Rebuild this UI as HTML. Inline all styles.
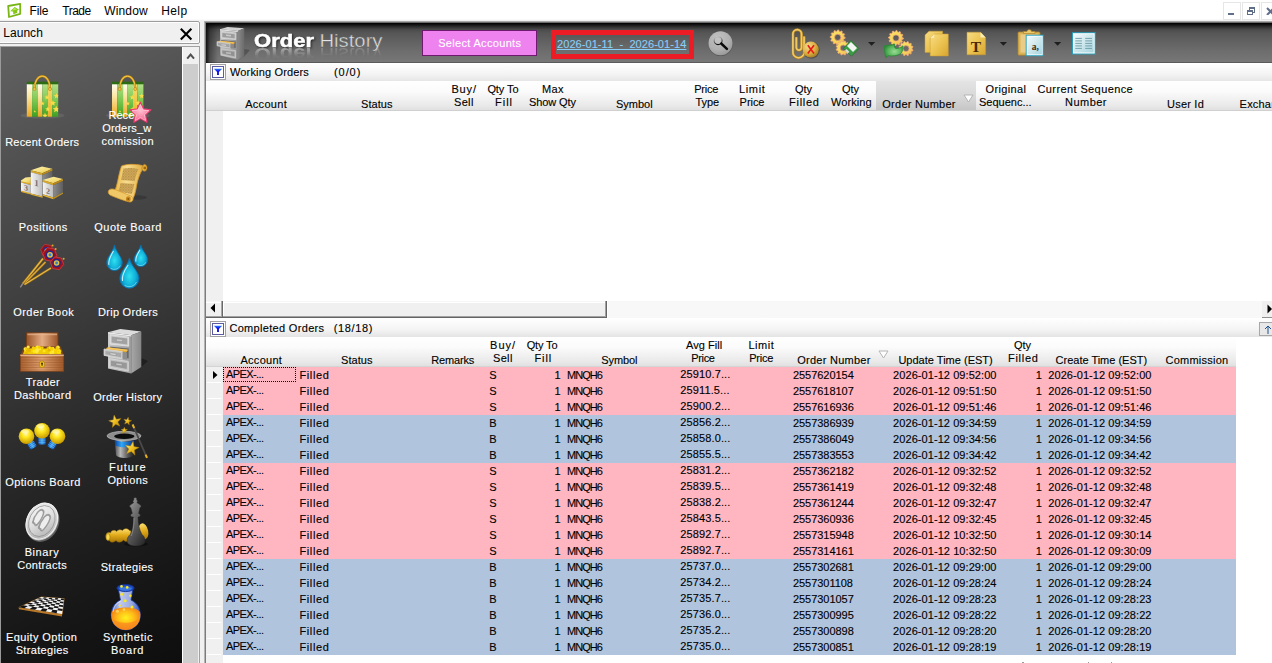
<!DOCTYPE html>
<html><head><meta charset="utf-8"><title>Order History</title>
<style>
*{box-sizing:border-box;margin:0;padding:0}
html,body{width:1272px;height:663px;overflow:hidden;background:#fff}
body{position:relative;font-family:"Liberation Sans",sans-serif;font-size:11px;color:#000}
.a{position:absolute}
.t{position:absolute;white-space:nowrap;line-height:13px;-webkit-text-stroke:0.12px currentColor}
.c{position:absolute;white-space:nowrap;line-height:13px;text-align:center;transform:translateX(-50%)}
.r{position:absolute;white-space:nowrap;line-height:13px;text-align:right}
.menu{position:absolute;top:3px;font-size:13px;line-height:16px;white-space:nowrap}
.lbl{position:absolute;color:#fff;font-size:11px;line-height:13px;text-align:center;transform:translateX(-50%);white-space:nowrap}
.hdr{background:linear-gradient(#ffffff 0%,#fbfbfb 35%,#e9e9e9 85%,#e0e0e0 100%)}
.row{position:absolute;left:223px;width:1013px;height:16px}
.rh{position:absolute;left:207px;width:14px;height:1px;background:#fff}
</style></head><body>

<svg class="a" style="left:4px;top:1px" width="20" height="20" viewBox="4 1 20 20">
 <polygon points="8.2,6 20.2,3.9 20.2,13.8 9,17" fill="#fff" stroke="#7ab516" stroke-width="1.8" stroke-linejoin="round"/>
 <polygon points="10.2,11.2 14.7,6.9 19,9.8 17.2,10.4 17.2,13 13.2,14.2 13.2,11.6" fill="#84c618"/>
 <polygon points="11.6,10.7 14.7,7.8 17,9.4 14.2,10.3" fill="#b0e84c"/>
</svg>
<div class="t" style="left:29.5px;top:2.6px;font-size:12px;line-height:16px;letter-spacing:-0.133px;-webkit-text-stroke:0">File</div>
<div class="t" style="left:62.3px;top:2.6px;font-size:12px;line-height:16px;letter-spacing:-0.525px;-webkit-text-stroke:0">Trade</div>
<div class="t" style="left:104.2px;top:2.6px;font-size:12px;line-height:16px;letter-spacing:0.16px;-webkit-text-stroke:0">Window</div>
<div class="t" style="left:161.3px;top:2.6px;font-size:12px;line-height:16px;letter-spacing:0.367px;-webkit-text-stroke:0">Help</div>

<div class="a" style="left:0;top:19px;width:1272px;height:2px;background:linear-gradient(#fff,#ececec)"></div>
<!-- window buttons -->
<div class="a" style="left:1223px;top:2px;width:18px;height:18px;border:1px solid #e6e6e6;background:#fff"></div>
<div class="a" style="left:1228px;top:13px;width:6px;height:2px;background:#60708a"></div>
<div class="a" style="left:1242px;top:2px;width:18px;height:18px;border:1px solid #e6e6e6;background:#fff"></div>
<div class="a" style="left:1249px;top:7px;width:6px;height:6px;border:1px solid #5e6e86;border-top-width:2px"></div>
<div class="a" style="left:1247px;top:10px;width:6px;height:5px;border:1px solid #5e6e86;border-top-width:2px;background:#fff"></div>
<div class="a" style="left:1261px;top:2px;width:18px;height:18px;border:1px solid #e6e6e6;background:#fff"></div>
<svg class="a" style="left:1266px;top:7px" width="8" height="8"><path d="M1 1L8 8M1 8L8 1" stroke="#60708a" stroke-width="2"/></svg>
<!-- Launch panel -->
<div class="a" style="left:-2px;top:21px;width:202px;height:23px;background:#f0f0f0;border:1px solid #9c9c9c;border-radius:2px;box-shadow:inset 0 0 0 1px #fdfdfd"></div>

<div class="t" style="left:3.2px;top:24.6px;font-size:12px;line-height:16px;letter-spacing:0.06px;-webkit-text-stroke:0">Launch</div>
<svg class="a" style="left:179px;top:27px" width="14" height="14"><path d="M1.8 1.8L12.4 12.4M12.4 1.8L1.8 12.4" stroke="#000" stroke-width="2.1"/></svg>


<!-- sidebar -->
<div class="a" style="left:0;top:44px;width:204px;height:619px;background:#f0f0f0"></div>
<div class="a" style="left:200px;top:21px;width:4px;height:30px;background:#f0f0f0"></div>
<div class="a" style="left:0;top:46px;width:200px;height:617px;background:#fff;border-top:1px solid #a0a0a0;border-right:1px solid #a0a0a0"></div>
<div class="a" style="left:0;top:47px;width:182px;height:616px;background:linear-gradient(155deg,#626262 0%,#505050 18%,#3c3c3c 42%,#262626 65%,#151515 88%,#0e0e0e 100%)"></div>
<div class="a" style="left:0;top:47px;width:1px;height:616px;background:#9a9a9a"></div>
<div class="a" style="left:183px;top:47px;width:16px;height:616px;background:#f0f0f0"></div>
<div class="a" style="left:183px;top:64px;width:15px;height:599px;background:#cdcdcd"></div>
<svg class="a" style="left:185px;top:51px" width="12" height="10"><path d="M2.2 7.6L5.6 3.6L9 7.6" fill="none" stroke="#505050" stroke-width="2"/></svg>

<svg class="a" style="left:0;top:47px" width="183" height="616" viewBox="0 47 183 616">
<defs>
 <linearGradient id="bL" x1="0" y1="0" x2="0" y2="1"><stop offset="0" stop-color="#fffdf0"/><stop offset="0.35" stop-color="#fbe9a8"/><stop offset="1" stop-color="#eea820"/></linearGradient>
 <linearGradient id="bY" x1="0" y1="0" x2="0" y2="1"><stop offset="0" stop-color="#f4e070"/><stop offset="1" stop-color="#eeb028"/></linearGradient>
 <linearGradient id="bG" x1="0" y1="0" x2="0" y2="1"><stop offset="0" stop-color="#b4e088"/><stop offset="0.5" stop-color="#7cc850"/><stop offset="1" stop-color="#3ea020"/></linearGradient>
 <radialGradient id="pk" cx="0.5" cy="0.4" r="0.6"><stop offset="0" stop-color="#ffc4d4"/><stop offset="0.6" stop-color="#f888a8"/><stop offset="1" stop-color="#f46088"/></radialGradient>
 <linearGradient id="sil" x1="0" y1="0" x2="1" y2="0"><stop offset="0" stop-color="#f4f4f4"/><stop offset="1" stop-color="#bdbdbd"/></linearGradient>
 <linearGradient id="silD" x1="0" y1="0" x2="1" y2="0"><stop offset="0" stop-color="#8c8c8c"/><stop offset="1" stop-color="#5e5e5e"/></linearGradient>
 <linearGradient id="gtop" x1="0" y1="0" x2="1" y2="1"><stop offset="0" stop-color="#fdf4b4"/><stop offset="0.6" stop-color="#f4dc78"/><stop offset="1" stop-color="#e0b030"/></linearGradient>
 <linearGradient id="parch" x1="0" y1="0" x2="1" y2="0"><stop offset="0" stop-color="#e8b848"/><stop offset="0.4" stop-color="#f8dc90"/><stop offset="1" stop-color="#e0a838"/></linearGradient>
 <radialGradient id="drop" cx="0.5" cy="0.6" r="0.6"><stop offset="0" stop-color="#30e0f0"/><stop offset="0.55" stop-color="#10b0d8"/><stop offset="1" stop-color="#0868a8"/></radialGradient>
 <linearGradient id="wood" x1="0" y1="0" x2="1" y2="0"><stop offset="0" stop-color="#a86030"/><stop offset="0.5" stop-color="#e0a070"/><stop offset="1" stop-color="#a05828"/></linearGradient>
 <linearGradient id="lid" x1="0" y1="0" x2="1" y2="0"><stop offset="0" stop-color="#9a5428"/><stop offset="0.5" stop-color="#e4ac84"/><stop offset="1" stop-color="#9a5428"/></linearGradient>
 <linearGradient id="cF" x1="0" y1="0" x2="1" y2="0"><stop offset="0" stop-color="#cacaca"/><stop offset="1" stop-color="#9a9a9a"/></linearGradient>
 <linearGradient id="cS" x1="0" y1="0" x2="1" y2="0"><stop offset="0" stop-color="#a8a8a8"/><stop offset="1" stop-color="#868686"/></linearGradient>
 <radialGradient id="bulb" cx="0.45" cy="0.35" r="0.65"><stop offset="0" stop-color="#fff8b0"/><stop offset="0.35" stop-color="#ffe820"/><stop offset="1" stop-color="#c89800"/></radialGradient>
 <linearGradient id="base" x1="0" y1="0" x2="1" y2="0"><stop offset="0" stop-color="#0848b0"/><stop offset="0.5" stop-color="#40a8f0"/><stop offset="1" stop-color="#0848b0"/></linearGradient>
 <linearGradient id="hat" x1="0" y1="0" x2="1" y2="0"><stop offset="0" stop-color="#4a4a4a"/><stop offset="0.3" stop-color="#b8b8b8"/><stop offset="0.65" stop-color="#5a5a5a"/><stop offset="1" stop-color="#1a1a1a"/></linearGradient>
 <linearGradient id="band" x1="0" y1="0" x2="1" y2="0"><stop offset="0" stop-color="#0840a0"/><stop offset="0.35" stop-color="#30a8f8"/><stop offset="1" stop-color="#082880"/></linearGradient>
 <linearGradient id="gst" x1="0" y1="0" x2="1" y2="1"><stop offset="0" stop-color="#fff090"/><stop offset="0.5" stop-color="#f0c020"/><stop offset="1" stop-color="#b88400"/></linearGradient>
 <linearGradient id="coin2" x1="0" y1="0.1" x2="1" y2="0.9"><stop offset="0" stop-color="#f6f6f6"/><stop offset="0.5" stop-color="#dedede"/><stop offset="1" stop-color="#b2b2b2"/></linearGradient><radialGradient id="coin" cx="0.4" cy="0.35" r="0.75"><stop offset="0" stop-color="#fafafa"/><stop offset="0.6" stop-color="#dcdcdc"/><stop offset="1" stop-color="#a4a4a4"/></radialGradient>
 <linearGradient id="king" x1="0.2" y1="0" x2="0.8" y2="1"><stop offset="0" stop-color="#9a9a9a"/><stop offset="0.35" stop-color="#6e6e6e"/><stop offset="0.7" stop-color="#4c4c4c"/><stop offset="1" stop-color="#2c2c2c"/></linearGradient>
 <linearGradient id="gpc" x1="0" y1="0" x2="0" y2="1"><stop offset="0" stop-color="#fce070"/><stop offset="0.5" stop-color="#e0a818"/><stop offset="1" stop-color="#a87808"/></linearGradient>
 <radialGradient id="liq" cx="0.5" cy="0.45" r="0.6"><stop offset="0" stop-color="#fff020"/><stop offset="0.45" stop-color="#ffc018"/><stop offset="1" stop-color="#f07018"/></radialGradient>
 <linearGradient id="glass" x1="0" y1="0" x2="1" y2="0"><stop offset="0" stop-color="#4868c8"/><stop offset="0.3" stop-color="#c0c8ec"/><stop offset="0.7" stop-color="#98a8e0"/><stop offset="1" stop-color="#3050b8"/></linearGradient>
 <pattern id="dots" width="1.6" height="1.6" patternUnits="userSpaceOnUse"><rect width="1.6" height="1.6" fill="#d4ac5c"/><rect x="0" y="0" width="0.8" height="0.8" fill="#a88038"/><rect x="0.8" y="0.8" width="0.8" height="0.8" fill="#b89048"/></pattern><clipPath id="bagclip"><rect x="26.8" y="81.7" width="31.4" height="35"/></clipPath>
 <g id="bag">
  <ellipse cx="42.5" cy="115.4" rx="22" ry="3.2" fill="#9a9a9a" opacity="0.2"/>
  <rect x="26.8" y="84" width="5.3" height="32.7" fill="url(#bL)"/>
  <rect x="32.1" y="84" width="5.8" height="32.7" fill="url(#bG)"/>
  <rect x="37.9" y="84" width="4.4" height="32.7" fill="url(#bL)"/>
  <rect x="42.3" y="84" width="5.5" height="32.7" fill="url(#bG)"/>
  <rect x="47.8" y="84" width="4.3" height="32.7" fill="url(#bY)"/>
  <rect x="52.1" y="84" width="6.1" height="32.7" fill="url(#bG)"/>
  <rect x="26.8" y="81.7" width="31.4" height="2.6" fill="#2c6c12"/>
  <g fill="#f8dc48" clip-path="url(#bagclip)"><polygon points="56.50,93.00 57.24,94.98 59.35,95.07 57.70,96.39 58.26,98.43 56.50,97.26 54.74,98.43 55.30,96.39 53.65,95.07 55.76,94.98"/><polygon points="47.00,94.60 47.69,96.45 49.66,96.53 48.12,97.76 48.65,99.67 47.00,98.58 45.35,99.67 45.88,97.76 44.34,96.53 46.31,96.45"/><polygon points="52.90,100.00 53.69,102.11 55.94,102.21 54.18,103.62 54.78,105.79 52.90,104.54 51.02,105.79 51.62,103.62 49.86,102.21 52.11,102.11"/><polygon points="42.70,101.30 43.24,102.75 44.79,102.82 43.58,103.79 43.99,105.28 42.70,104.42 41.41,105.28 41.82,103.79 40.61,102.82 42.16,102.75"/><polygon points="47.80,106.50 48.49,108.35 50.46,108.43 48.92,109.66 49.45,111.57 47.80,110.48 46.15,111.57 46.68,109.66 45.14,108.43 47.11,108.35"/><polygon points="56.20,105.50 57.14,108.01 59.81,108.13 57.72,109.79 58.43,112.37 56.20,110.90 53.97,112.37 54.68,109.79 52.59,108.13 55.26,108.01"/><polygon points="45.00,112.60 45.79,114.71 48.04,114.81 46.28,116.22 46.88,118.39 45.00,117.14 43.12,118.39 43.72,116.22 41.96,114.81 44.21,114.71"/><polygon points="34.80,110.00 35.15,110.92 36.13,110.97 35.36,111.58 35.62,112.53 34.80,111.99 33.98,112.53 34.24,111.58 33.47,110.97 34.45,110.92"/><polygon points="50.00,88.40 50.39,89.46 51.52,89.51 50.64,90.21 50.94,91.29 50.00,90.67 49.06,91.29 49.36,90.21 48.48,89.51 49.61,89.46"/>  </g>
  <path d="M34.5 89C34.5 71.8 50 71.8 50 89" fill="none" stroke="#a87810" stroke-width="2.2"/>
  <path d="M34.5 89C34.5 71.8 50 71.8 50 89" fill="none" stroke="#f0c040" stroke-width="1.2"/>
  <circle cx="34.5" cy="89" r="1.6" fill="#f0c040" stroke="#a87810" stroke-width="0.5"/>
  <circle cx="50" cy="89" r="1.6" fill="#f0c040" stroke="#a87810" stroke-width="0.5"/>
 </g>
</defs>
<use href="#bag"/>
<use href="#bag" transform="translate(85.2,0)"/>

<g>
 <!-- left block 3 -->
 <polygon points="21,180.4 25.4,177.4 30.8,177 30.8,184 21,182.2" fill="url(#gtop)"/>
 <polygon points="21,181.2 30.8,183.6 30.8,185 21,182.6" fill="#d8a828"/>
 <polygon points="21,182.6 30.8,185 30.8,194 21,191.4" fill="url(#sil)"/>
 <polygon points="21,190.6 30.8,193.2 30.8,194.6 21,192" fill="#d8a828"/>
 <!-- center block 1 -->
 <polygon points="30.8,170.3 42,166.6 52.4,168.8 42.3,173.2" fill="url(#gtop)"/>
 <polygon points="30.8,170.3 42.3,173.2 42.3,175.2 30.8,172.2" fill="#d8a828"/>
 <polygon points="42.3,173.2 52.4,168.8 52.4,170.8 42.3,175.2" fill="#b88818"/>
 <polygon points="30.8,172.2 42.3,175.2 42.3,196.4 30.8,193.4" fill="url(#sil)"/>
 <polygon points="42.3,175.2 52.4,170.8 52.4,180 42.3,184" fill="url(#silD)"/>
 <!-- right block 2 -->
 <polygon points="42.7,180.1 53.6,176.8 63,179 53.3,183.3" fill="url(#gtop)"/>
 <polygon points="42.7,180.1 53.3,183.3 53.3,185.3 42.7,182.1" fill="#d8a828"/>
 <polygon points="53.3,183.3 63,179 63,181 53.3,185.3" fill="#b88818"/>
 <polygon points="42.7,182.1 53.3,185.3 53.3,197.6 42.7,194.2" fill="url(#sil)"/>
 <polygon points="53.3,185.3 63,181 63,192.4 53.3,197.6" fill="url(#silD)"/>
 <polygon points="42.7,194.2 53.3,197.6 53.3,199.2 42.7,195.8" fill="#e0b030"/>
 <polygon points="53.3,197.6 63,192.4 63,193.8 53.3,199.2" fill="#c09020"/>
 <polygon points="30.8,193.4 42.7,196.4 42.7,197.8 30.8,194.8" fill="#e0b030"/>
 <g font-family="Liberation Serif, serif" font-size="8px" font-weight="bold" fill="#707070" text-anchor="middle">
  <text x="36.5" y="186" font-size="9px" transform="skewY(14)" style="transform-origin:36.5px 186px">1</text>
  <text x="26" y="190.5" transform="skewY(14)" style="transform-origin:26px 190px">3</text>
  <text x="48" y="194" transform="skewY(17)" style="transform-origin:48px 194px">2</text>
 </g>
</g>

<g>
 <ellipse cx="138" cy="197.5" rx="9" ry="2.2" fill="#000" opacity="0.18"/>
 <path d="M121.5 166 C128 163.5 139 164 145 166.5 C141 170 138 178 136.5 186 C135.5 192 134.5 196 132.5 199.5 C126 198 118 195.5 114.5 191 C117.5 186 118 176 121.5 166Z" fill="url(#parch)" stroke="#d89828" stroke-width="0.8"/>
 <path d="M123.5 168.5 C128 167.5 134 167.8 138.5 169 C136.5 173 135.5 177 134.8 181 L121 180 C122 176 122.5 172 123.5 168.5Z" fill="url(#dots)" opacity="0.9"/>
 <path d="M120.5 183 L134.3 184 C133.5 188 132.8 191 131.6 194 L118.2 191.5 C119.4 189 120 186 120.5 183Z" fill="url(#dots)" opacity="0.9"/>
 <path d="M144 164.2 C147.5 164.5 148 169 145.5 171 C143.5 172 141.5 170 142 167.5Z" fill="#e8b040" stroke="#b07818" stroke-width="0.6"/>
 <circle cx="144.8" cy="168" r="1.4" fill="#a06810"/>
 <path d="M108.3 191.5 C108.5 189 112 188.3 115 189.5 L131 196 C134 197.5 133.5 202 130 202 C126 201.5 113 196.5 110 195 C108.5 194 108.2 193 108.3 191.5Z" fill="#f0c868" stroke="#d89828" stroke-width="0.7"/>
 <ellipse cx="128.3" cy="199" rx="2.4" ry="2.8" fill="#c88820"/>
 <circle cx="128.3" cy="199" r="1" fill="#8a5808"/>
</g>

<g>
 <path d="M20.3 287.4L23.5 282.5" stroke="#8a8a8a" stroke-width="1.4"/>
 <path d="M23 283.5L43 258.5" stroke="#8a6414" stroke-width="2.6"/>
 <path d="M23 283.5L43 258.5" stroke="#e8b848" stroke-width="1.3"/>
 <path d="M24 284L45.5 262" stroke="#8a6414" stroke-width="2.4"/>
 <path d="M24 284L45.5 262" stroke="#e0a838" stroke-width="1.2"/>
 <path d="M24.5 284.5L51 268" stroke="#8a6414" stroke-width="2.6"/>
 <path d="M24.5 284.5L51 268" stroke="#e8b848" stroke-width="1.3"/>
 <polygon points="53.40,251.63 49.22,256.61 42.82,255.48 40.60,249.37 44.78,244.39 51.18,245.52" fill="#981018" stroke="#c03840" stroke-width="0.8"/>
 <circle cx="46.5" cy="250.5" r="3.4" fill="#202c90"/><circle cx="46.5" cy="250.5" r="2" fill="#e8c040"/>
 <polygon points="56.89,255.75 52.26,261.27 45.17,260.02 42.71,253.25 47.34,247.73 54.43,248.98" fill="#a01018" stroke="#d04048" stroke-width="0.8"/>
 <circle cx="50" cy="254.8" r="4.4" fill="#1c2a90"/><circle cx="50" cy="254.8" r="2.9" fill="#e8c040"/><circle cx="50" cy="254.8" r="1.5" fill="#3080d0"/>
 <polygon points="63.70,264.48 59.33,269.69 52.63,268.51 50.30,262.12 54.67,256.91 61.37,258.09" fill="#a01018" stroke="#d04048" stroke-width="0.8"/>
 <circle cx="56.6" cy="263" r="4.2" fill="#1c2a90"/><circle cx="56.6" cy="263" r="2.8" fill="#e8c040"/><circle cx="56.6" cy="263" r="1.4" fill="#3080d0"/>
 <circle cx="52.6" cy="245.5" r="1" fill="#d8a830"/><circle cx="55.6" cy="249" r="1" fill="#d8a830"/><circle cx="63.6" cy="258.8" r="1" fill="#d8a830"/>
</g>
<g><path d="M114.5 245 C116.45 253.01 122.3 256.95 122.3 262.8 A7.8 7.8 0 0 1 106.7 262.8 C106.7 256.95 112.55 253.01 114.5 245Z" fill="url(#drop)" stroke="#0a70b0" stroke-width="0.8"/><path d="M113.33 251.23000000000002 C110.21 256.56 108.26 261.24 108.884 264.36" fill="none" stroke="#d8f8ff" stroke-width="1.1" stroke-linecap="round" opacity="0.9"/><path d="M110.6 268.26 A6.63 6.63 0 0 0 120.35 265.53000000000003" fill="none" stroke="#90e8f8" stroke-width="0.8" opacity="0.8"/><path d="M140.8 245 C142.5 251.66 147.60000000000002 254.70000000000002 147.60000000000002 259.8 A6.8 6.8 0 0 1 134.0 259.8 C134.0 254.70000000000002 139.10000000000002 251.66 140.8 245Z" fill="url(#drop)" stroke="#0a70b0" stroke-width="0.8"/><path d="M139.78 250.18 C137.06 254.36 135.36 258.44 135.90400000000002 261.16" fill="none" stroke="#d8f8ff" stroke-width="1.1" stroke-linecap="round" opacity="0.9"/><path d="M137.4 264.56 A5.779999999999999 5.779999999999999 0 0 0 145.9 262.18" fill="none" stroke="#90e8f8" stroke-width="0.8" opacity="0.8"/><path d="M129.4 258 C131.8 267.27 139.0 271.40000000000003 139.0 278.6 A9.6 9.6 0 0 1 119.80000000000001 278.6 C119.80000000000001 271.40000000000003 127.0 267.27 129.4 258Z" fill="url(#drop)" stroke="#0a70b0" stroke-width="0.8"/><path d="M127.96000000000001 265.21 C124.12 270.92 121.72 276.68 122.488 280.52000000000004" fill="none" stroke="#d8f8ff" stroke-width="1.1" stroke-linecap="round" opacity="0.9"/><path d="M124.60000000000001 285.32000000000005 A8.16 8.16 0 0 0 136.6 281.96000000000004" fill="none" stroke="#90e8f8" stroke-width="0.8" opacity="0.8"/></g>
<g>
 <rect x="26.5" y="332.8" width="31.5" height="16" fill="url(#lid)" stroke="#7a3c18" stroke-width="0.8"/>
 <rect x="27.5" y="333.6" width="29.5" height="1.6" fill="#e8b890" opacity="0.7"/>
 <polygon points="24,346.5 60.8,346.5 63.8,355 20.3,355" fill="#7a4420"/>
 <polygon points="25,348.6 60,348.6 61.6,354.8 22.8,354.8" fill="#f0cc08"/>
 <circle cx="33.3" cy="347.7" r="1.5" fill="#f8d000"/><circle cx="28.2" cy="347.1" r="1.6" fill="#ffe848"/><circle cx="53.0" cy="352.4" r="1.3" fill="#ffe848"/><circle cx="34.7" cy="348.2" r="1.2" fill="#f8d000"/><circle cx="58.0" cy="347.2" r="1.7" fill="#ffe848"/><circle cx="53.0" cy="348.4" r="1.4" fill="#ffe848"/><circle cx="28.0" cy="351.2" r="1.7" fill="#f8d000"/><circle cx="31.2" cy="350.3" r="1.2" fill="#ffe848"/><circle cx="25.3" cy="349.0" r="1.7" fill="#ffe848"/><circle cx="54.7" cy="350.6" r="1.5" fill="#ffe848"/><circle cx="40.1" cy="348.1" r="1.4" fill="#ffe818"/><circle cx="27.8" cy="350.2" r="2.0" fill="#e8b800"/><circle cx="49.5" cy="348.0" r="1.7" fill="#ffe818"/><circle cx="39.4" cy="348.4" r="1.7" fill="#ffe848"/><circle cx="31.4" cy="350.1" r="1.6" fill="#f8d000"/><circle cx="56.7" cy="347.7" r="1.2" fill="#f8d000"/><circle cx="34.7" cy="351.1" r="1.9" fill="#ffe818"/><circle cx="36.6" cy="348.2" r="1.5" fill="#ffe818"/><circle cx="37.5" cy="347.6" r="2.0" fill="#ffe848"/><circle cx="50.7" cy="353.7" r="1.1" fill="#ffe848"/><circle cx="36.3" cy="348.1" r="1.7" fill="#ffe818"/><circle cx="35.3" cy="348.3" r="1.5" fill="#f8d000"/><circle cx="33.8" cy="351.2" r="1.2" fill="#ffe818"/><circle cx="37.7" cy="350.2" r="1.4" fill="#ffe848"/><circle cx="59.9" cy="351.0" r="1.5" fill="#f8d000"/><circle cx="39.8" cy="348.5" r="1.2" fill="#ffe818"/><circle cx="50.8" cy="351.2" r="2.0" fill="#ffe818"/><circle cx="44.1" cy="351.1" r="1.4" fill="#ffe818"/><circle cx="29.3" cy="350.7" r="1.8" fill="#e8b800"/><circle cx="47.8" cy="348.4" r="1.3" fill="#e8b800"/><circle cx="39.4" cy="347.3" r="1.5" fill="#f8d000"/><circle cx="47.7" cy="350.0" r="1.3" fill="#f8d000"/><circle cx="26.1" cy="348.8" r="1.3" fill="#f8d000"/><circle cx="52.0" cy="349.9" r="1.3" fill="#ffe848"/><circle cx="26.8" cy="353.5" r="1.6" fill="#e8b800"/><circle cx="58.7" cy="351.6" r="1.9" fill="#ffe818"/><circle cx="42.3" cy="347.7" r="1.3" fill="#f8d000"/><circle cx="36.8" cy="351.6" r="1.8" fill="#ffe848"/><circle cx="53.5" cy="350.7" r="1.7" fill="#ffe848"/><circle cx="36.8" cy="349.7" r="1.5" fill="#ffe848"/><circle cx="58.7" cy="351.7" r="1.1" fill="#f8d000"/><circle cx="51.8" cy="348.9" r="1.9" fill="#f8d000"/><circle cx="49.1" cy="350.3" r="1.5" fill="#e8b800"/><circle cx="57.5" cy="348.5" r="1.1" fill="#f8d000"/><circle cx="25.5" cy="353.1" r="1.2" fill="#e8b800"/><circle cx="55.7" cy="350.9" r="1.9" fill="#f8d000"/>
 <rect x="20.3" y="354.6" width="43.5" height="16.8" fill="url(#wood)" stroke="#7a3c18" stroke-width="0.6"/>
 <g stroke="#8a4a20" stroke-width="0.6" opacity="0.55"><path d="M20.5 357.5h43M20.5 360h43M20.5 362.5h43M20.5 365h43M20.5 367.5h43M20.5 370h43"/></g>
 <rect x="20.3" y="354.6" width="43.5" height="1.5" fill="#f0c098" opacity="0.8"/>
 <rect x="39.4" y="361" width="5.2" height="6.6" rx="2.2" fill="#f0c020" stroke="#a07808" stroke-width="0.6"/>
 <circle cx="42" cy="363.5" r="0.9" fill="#3a2808"/><rect x="41.6" y="363.5" width="0.9" height="2.4" fill="#3a2808"/>
</g>

<g>
 <polygon points="131.2,373.6 141.3,367 148,361 141.3,358" fill="#000" opacity="0.35"/>
 <polygon points="108,332.3 120.3,329 141.3,331.6 131.2,335.2" fill="#dcdcdc"/>
 <polygon points="131.2,335.2 141.3,331.6 141.3,367 131.2,373.6" fill="url(#cS)"/>
 <polygon points="108,332.3 131.2,335.2 131.2,373.6 108,368.5" fill="url(#cF)"/>
 <polygon points="108,332.3 131.2,335.2 131.2,336.4 108,333.5" fill="#ececec"/>
 <!-- top drawer -->
 <polygon points="110.1,334.8 128.7,337 128.7,346.2 110.1,344" fill="#d0d0d0" stroke="#e6e6e6" stroke-width="0.8"/>
 <polygon points="111.6,336.6 127.2,338.5 127.2,344.4 111.6,342.5" fill="#a2a2a2"/>
 <polygon points="116.5,338.9 122.5,339.6 122.5,341.6 116.5,340.9" fill="#d0d0d0" stroke="#888" stroke-width="0.4"/>
 <!-- bottom drawer -->
 <polygon points="109.4,358.8 128.3,361.4 128.3,371.2 109.4,367.2" fill="#c2c2c2" stroke="#dadada" stroke-width="0.8"/>
 <polygon points="111,360.8 126.8,363 126.8,369 111,365.8" fill="#989898"/>
 <polygon points="116,363 122,363.8 122,365.9 116,365" fill="#c8c8c8" stroke="#808080" stroke-width="0.4"/>
 <!-- middle -->
 <polygon points="110.1,346.4 128.7,348.6 128.7,358.6 110.1,356.4" fill="#6a6a6a"/>
 <polygon points="107.2,347.2 128.3,349.7 126,352.8 122.5,353.2 105.5,349.6" fill="#e8a82e"/>
 <polygon points="108.4,347.5 127.3,349.7 126.6,350.9 107.4,348.7" fill="#f8c860"/>
 <polygon points="104,349 122.5,351.5 122.5,359 104,355.4" fill="#c8c8c8" stroke="#e0e0e0" stroke-width="0.7"/>
 <polygon points="105.5,351 121,353.1 121,357.2 105.5,354.2" fill="#a8a8a8"/>
 <polygon points="110,352.8 116,353.6 116,355.5 110,354.6" fill="#d8d8d8" stroke="#888" stroke-width="0.4"/>
 <polygon points="122.5,351.5 127,352.8 127,359.4 122.5,359" fill="#8c8c8c"/>
</g>
<g><g transform="rotate(-32 26.5 436.2)"><rect x="22.8" y="442.4" width="7.4" height="7.6" rx="1" fill="url(#base)"/><g stroke="#80d0ff" stroke-width="0.6" opacity="0.8"><path d="M23.0 444.4h7M23.0 446.2h7M23.0 448.0h7"/></g></g><g transform="rotate(32 57.5 436.2)"><rect x="53.8" y="442.4" width="7.4" height="7.6" rx="1" fill="url(#base)"/><g stroke="#80d0ff" stroke-width="0.6" opacity="0.8"><path d="M54.0 444.4h7M54.0 446.2h7M54.0 448.0h7"/></g></g><g transform="rotate(0 42 430.8)"><rect x="38.3" y="437.0" width="7.4" height="7.6" rx="1" fill="url(#base)"/><g stroke="#80d0ff" stroke-width="0.6" opacity="0.8"><path d="M38.5 439.0h7M38.5 440.8h7M38.5 442.6h7"/></g></g><circle cx="26.5" cy="436.2" r="7.8" fill="url(#bulb)"/><circle cx="57.5" cy="436.2" r="7.8" fill="url(#bulb)"/><circle cx="42" cy="430.8" r="7.8" fill="url(#bulb)"/><ellipse cx="25" cy="431.5" rx="4" ry="2" fill="#fff" opacity="0.45"/><ellipse cx="56" cy="431.5" rx="4" ry="2" fill="#fff" opacity="0.45"/><ellipse cx="40.5" cy="426" rx="4" ry="2" fill="#fff" opacity="0.45"/></g>
<g>
 <path d="M114.5 437 L116 455 C118 459 131.5 459 133.5 455 L134.7 437Z" fill="url(#hat)"/>
 <path d="M114.7 439.8 C120 442.5 129 442.5 134.5 439.8 L134.1 445.3 C129 448 120 448 115.1 445.3Z" fill="url(#band)"/>
 <ellipse cx="124" cy="435.9" rx="17" ry="4.6" fill="#8e8e8e" stroke="#c4c4c4" stroke-width="0.6"/>
 <ellipse cx="124.3" cy="436.3" rx="10.2" ry="2.7" fill="#0c0c0c"/>
 <path d="M132.6 424.5L147 457.8" stroke="#4a4a4a" stroke-width="1.8"/>
 <path d="M132.6 424.5L134.2 428.2" stroke="#e8b020" stroke-width="2"/>
 <path d="M145.6 454.6L147 457.8" stroke="#e8b020" stroke-width="2"/>
 <polygon points="114.05,415.10 116.38,419.17 121.03,418.50 117.87,421.98 119.95,426.18 115.67,424.26 112.31,427.53 112.82,422.87 108.66,420.68 113.26,419.72" fill="url(#gst)" stroke="#a87808" stroke-width="0.4"/>
 <polygon points="128.21,417.16 128.72,420.02 131.56,420.63 129.00,422.00 129.30,424.89 127.20,422.87 124.55,424.05 125.82,421.44 123.88,419.28 126.75,419.67" fill="url(#gst)" stroke="#a87808" stroke-width="0.4"/>
 <polygon points="124.30,427.20 125.12,429.37 127.44,429.48 125.63,430.93 126.24,433.17 124.30,431.90 122.36,433.17 122.97,430.93 121.16,429.48 123.48,429.37" fill="url(#gst)" stroke="#a87808" stroke-width="0.4"/>
 <polygon points="133.08,441.31 133.96,446.52 139.13,447.57 134.45,450.01 135.04,455.25 131.28,451.55 126.48,453.74 128.83,449.02 125.27,445.13 130.48,445.90" fill="url(#gst)" stroke="#a87808" stroke-width="0.4"/>
</g>

<g transform="rotate(28 42 521.6)">
 <ellipse cx="43.8" cy="522.6" rx="15.4" ry="19.4" fill="#5c5c5c"/>
 <ellipse cx="42" cy="521.6" rx="15.6" ry="19.6" fill="#c4c4c4"/>
 <ellipse cx="41.6" cy="521.2" rx="14.8" ry="18.8" fill="url(#coin)" stroke="#f4f4f4" stroke-width="0.9"/>
 <ellipse cx="41.6" cy="521.2" rx="12.4" ry="16.2" fill="url(#coin2)" stroke="#8e8e8e" stroke-width="0.7"/>
 <g fill="#9a9a9a" stroke="#9a9a9a" stroke-width="0.8">
  <path d="M33.4 518 C33 511 38 508 39.6 513 C40.6 516 40.6 522 39.8 526 C39.2 529 36.8 529 36.4 527 C35 528.4 33.2 527 33.6 524.6 C32.6 522.6 33 520 33.4 518Z"/>
  <path d="M41.4 519 C41 512 46.4 509.6 47.8 514.6 C48.8 518 48.4 524 47.4 528 C46.8 531 44.4 531 44 529 C42.6 530.4 40.8 529 41.2 526.6 C40.4 524.4 41 521.4 41.4 519Z"/>
 </g>
 <g fill="#eeeeee">
  <path d="M34.4 518 C34.2 512.4 37.8 510.4 38.8 514 C39.6 517 39.4 521.4 38.8 525 C38.4 527.4 37 527.4 36.8 525.6 C35.6 526.6 34.4 525.6 34.6 523.8 C33.8 522 34.2 519.6 34.4 518Z"/>
  <path d="M42.4 519 C42.2 513.6 46 511.6 47 515.4 C47.8 518.6 47.4 523.4 46.6 527 C46.2 529.4 44.8 529.4 44.6 527.6 C43.4 528.6 42.2 527.6 42.4 525.8 C41.6 524 42.2 520.8 42.4 519Z"/>
 </g>
</g>

<g>
 <ellipse cx="136" cy="544" rx="12" ry="2.5" fill="#000" opacity="0.4"/>
 <ellipse cx="143.4" cy="531.4" rx="4.8" ry="8.2" fill="url(#gpc)" transform="rotate(-12 143.4 531.4)"/>
 <path d="M106 538 C105 533.5 108 531.5 110.5 533 C111 530 115 529.5 116.5 531.5 C118 529.5 121 529.2 122.5 530.5 C124 528 128 528 129.5 530.5 L131 531 L131 540.5 C128 542.5 125 541.5 123.5 540 C121 542.8 117.5 542.8 116 540.5 C113.5 543 110 542.5 109.5 540.5 C107.5 541 106.3 540 106 538Z" fill="url(#gpc)" stroke="#8a6408" stroke-width="0.5"/>
 <ellipse cx="108" cy="537" rx="2" ry="3.3" fill="#f8d850" stroke="#8a6408" stroke-width="0.5"/>
 <path d="M135.2 497.6 C136.6 497.6 137.2 499 136.6 500 C138 500.4 138 502.2 136.8 502.6 L140.8 505.2 C141.6 506.2 141 507.4 140 507.6 L138.6 513.4 C140.6 514 141 516 139.4 516.8 L138 517 C138.2 524 139.4 530 142 534.5 C144.5 536.5 145.4 539 145 541.5 C145 544.8 140 546 136 546 C132 546 127.2 544.8 127.2 541.5 C126.8 539 127.8 536.5 130.2 534.5 C132.6 530 133.4 524 133.4 517 L131.6 516.8 C130 516 130.4 514 132.4 513.4 L130.8 507.6 C129.8 507.4 129.2 506.2 130 505.2 L133.8 502.6 C132.6 502.2 132.6 500.4 134 500 C133.4 499 134 497.6 135.2 497.6Z" fill="url(#king)" stroke="#222" stroke-width="0.4"/>
 <path d="M134 518 C134 526 133 532 131 536" stroke="#a0a0a0" stroke-width="1" fill="none" opacity="0.6"/>
</g>

<g>
 <polygon points="18.8,607.3 62,614 62,616.6 18.8,609.3" fill="#b87828"/>
 <polygon points="18.2,607.3 41.3,596.5 64.6,598.2 62.6,614.6" fill="#a06820"/>
 <polygon points="19.8,607.3 41.3,597.1 64,598.6 62,614" fill="#f4f4f4"/>
 <g fill="#141414"><polygon points="18.80,607.30 24.20,608.14 27.98,606.08 23.06,605.37"/><polygon points="26.22,603.94 30.78,604.56 33.30,603.19 29.07,602.65"/><polygon points="31.72,601.44 35.65,601.91 37.89,600.69 34.25,600.30"/><polygon points="36.67,599.20 40.04,599.52 42.12,598.39 39.02,598.13"/><polygon points="27.98,606.08 32.89,606.80 35.33,605.18 30.78,604.56"/><polygon points="33.30,603.19 37.53,603.73 39.58,602.37 35.65,601.91"/><polygon points="37.89,600.69 41.53,601.08 43.40,599.84 40.04,599.52"/><polygon points="42.12,598.39 45.21,598.64 46.97,597.48 44.14,597.29"/><polygon points="29.60,608.97 35.00,609.81 37.81,607.51 32.89,606.80"/><polygon points="35.33,605.18 39.89,605.80 41.76,604.27 37.53,603.73"/><polygon points="39.58,602.37 43.51,602.83 45.17,601.47 41.53,601.08"/><polygon points="43.40,599.84 46.77,600.16 48.31,598.89 45.21,598.64"/><polygon points="37.81,607.51 42.72,608.22 44.44,606.43 39.89,605.80"/><polygon points="41.76,604.27 45.99,604.81 47.44,603.30 43.51,602.83"/><polygon points="45.17,601.47 48.81,601.86 50.13,600.48 46.77,600.16"/><polygon points="48.31,598.89 51.41,599.15 52.65,597.85 49.81,597.66"/><polygon points="40.40,610.65 45.80,611.49 47.64,608.94 42.72,608.22"/><polygon points="44.44,606.43 49.00,607.05 50.22,605.35 45.99,604.81"/><polygon points="47.44,603.30 51.36,603.76 52.45,602.25 48.81,601.86"/><polygon points="50.13,600.48 53.50,600.80 54.51,599.40 51.41,599.15"/><polygon points="47.64,608.94 52.55,609.65 53.55,607.67 49.00,607.05"/><polygon points="50.22,605.35 54.45,605.89 55.29,604.23 51.36,603.76"/><polygon points="52.45,602.25 56.09,602.64 56.86,601.12 53.50,600.80"/><polygon points="54.51,599.40 57.60,599.65 58.33,598.23 55.49,598.04"/><polygon points="51.20,612.33 56.60,613.16 57.46,610.37 52.55,609.65"/><polygon points="53.55,607.67 58.11,608.30 58.68,606.43 54.45,605.89"/><polygon points="55.29,604.23 59.22,604.69 59.73,603.04 56.09,602.64"/><polygon points="56.86,601.12 60.22,601.44 60.70,599.91 57.60,599.65"/><polygon points="57.46,610.37 62.38,611.08 62.66,608.92 58.11,608.30"/><polygon points="58.68,606.43 62.91,606.97 63.15,605.16 59.22,604.69"/><polygon points="59.73,603.04 63.37,603.43 63.59,601.77 60.22,601.44"/><polygon points="60.70,599.91 63.80,600.16 64.00,598.60 61.16,598.41"/></g>
</g>

<g>
 <path d="M118.2 588 L120.4 600 C113 603.5 111.2 610 111.2 615.5 A14.6 14.6 0 0 0 140.4 615.5 C140.4 610 138.6 603.5 131 600 L133 588Z" fill="url(#glass)" stroke="#1838a0" stroke-width="0.8"/>
 <path d="M111.6 612 C114 608.6 120 607.6 125.8 607.6 C131.6 607.6 137.6 608.6 140 612 C140.6 614 140.4 615.5 140.4 615.5 A14.6 14.6 0 0 1 111.2 615.5 C111.2 615.5 111 614 111.6 612Z" fill="url(#liq)"/>
 <path d="M113.5 619 C117 624 134 624 138 619 C136 626.5 130 629.4 125.8 629.4 C121.6 629.4 115.5 626.5 113.5 619Z" fill="#f88820" opacity="0.7"/>
 <ellipse cx="125.5" cy="588" rx="8.7" ry="3.6" fill="#1c48c0" stroke="#0c2c90" stroke-width="0.8"/>
 <ellipse cx="125.5" cy="588.6" rx="6.4" ry="2.2" fill="#3a78e0"/>
 <g fill="#f8e820"><circle cx="121.5" cy="586.4" r="1.3"/><circle cx="127.2" cy="587.4" r="1.3"/><circle cx="121.8" cy="594.4" r="1.4"/><circle cx="130.4" cy="595.8" r="1.3"/><circle cx="125.2" cy="600.8" r="1.5"/><circle cx="119.8" cy="605.6" r="1.1"/><circle cx="132" cy="607" r="1.5"/></g>
 <g fill="#ffd860" opacity="0.9"><circle cx="117.4" cy="611.2" r="1.5"/><circle cx="124" cy="609.6" r="1.3"/></g>
 <path d="M113.2 612 C113.6 606 117 602.6 120.6 601.4" stroke="#fff" stroke-width="1" fill="none" opacity="0.55"/>
</g>
</svg>

<div class="t" style="left:5.2px;top:136px;letter-spacing:0.192px;color:#fff">Recent Orders</div>
<div class="t" style="left:108.4px;top:109px;letter-spacing:0.08px;color:#fff">Recent</div>
<div class="t" style="left:102.2px;top:122px;letter-spacing:0.2px;color:#fff">Orders_w</div>
<div class="t" style="left:101.5px;top:135px;letter-spacing:0.387px;color:#fff">comission</div>
<div class="t" style="left:18.8px;top:221px;letter-spacing:0.475px;color:#fff">Positions</div>
<div class="t" style="left:94.3px;top:221px;letter-spacing:0.48px;color:#fff">Quote Board</div>
<div class="t" style="left:13.2px;top:306px;letter-spacing:0.478px;color:#fff">Order Book</div>
<div class="t" style="left:98px;top:306px;letter-spacing:0.28px;color:#fff">Drip Orders</div>
<div class="t" style="left:25.8px;top:376px;letter-spacing:0.4px;color:#fff">Trader</div>
<div class="t" style="left:13.9px;top:389px;letter-spacing:0.413px;color:#fff">Dashboard</div>
<div class="t" style="left:93.2px;top:391px;letter-spacing:0.283px;color:#fff">Order History</div>
<div class="t" style="left:5.2px;top:476px;letter-spacing:0.4px;color:#fff">Options Board</div>
<div class="t" style="left:109.1px;top:461px;letter-spacing:0.96px;color:#fff">Future</div>
<div class="t" style="left:107.4px;top:474px;letter-spacing:0.4px;color:#fff">Options</div>
<div class="t" style="left:24.7px;top:546px;letter-spacing:0.56px;color:#fff">Binary</div>
<div class="t" style="left:17.2px;top:559px;letter-spacing:0.3px;color:#fff">Contracts</div>
<div class="t" style="left:100.7px;top:561px;letter-spacing:0.322px;color:#fff">Strategies</div>
<div class="t" style="left:5.9px;top:631px;letter-spacing:0.408px;color:#fff">Equity Option</div>
<div class="t" style="left:15.7px;top:644px;letter-spacing:0.333px;color:#fff">Strategies</div>
<div class="t" style="left:103px;top:631px;letter-spacing:0.525px;color:#fff">Synthetic</div>
<div class="t" style="left:111px;top:644px;letter-spacing:0.775px;color:#fff">Board</div>
<svg class="a" style="left:125px;top:98px" width="32" height="30" viewBox="125 98 32 30">
 <polygon points="140.40,102.20 143.46,108.99 150.86,109.80 145.35,114.81 146.87,122.10 140.40,118.40 133.93,122.10 135.45,114.81 129.94,109.80 137.34,108.99" fill="url(#pk)" stroke="#ee3c70" stroke-width="1.3" stroke-linejoin="round"/>
 <polygon points="140.40,104.60 142.93,109.92 148.77,110.68 144.49,114.73 145.57,120.52 140.40,117.70 135.23,120.52 136.31,114.73 132.03,110.68 137.87,109.92" fill="none" stroke="#ffd8e4" stroke-width="0.8" stroke-linejoin="round" opacity="0.85"/>
</svg>

<!-- main panel frame -->
<div class="a" style="left:204px;top:21px;width:1068px;height:642px;background:#7c7c7c"></div>
<div class="a" style="left:204px;top:21px;width:1px;height:642px;background:#b4b4b4"></div>
<div class="a" style="left:204px;top:21px;width:1068px;height:42px;background:linear-gradient(#a8a8a8 0px,#a8a8a8 1px,#6c6c6c 1px,#6c6c6c 2px,#000 2px,#0a0a0a 3px,#2a2a2a 5.5px,#4a4a4a 8.5px,#565656 12px,#626262 21px,#6e6e6e 31px,#767676 40.5px,#767676 41px,#5a5a5a 41px,#5a5a5a 42px)"></div>
<div class="a" style="left:204px;top:23px;width:14px;height:40px;background:linear-gradient(to right,rgba(0,0,0,.0) 0,rgba(0,0,0,.0) 2px,rgba(0,0,0,.85) 2px,rgba(0,0,0,.35) 6px,rgba(0,0,0,0) 14px)"></div>
<div class="a" style="left:204px;top:21px;width:1px;height:42px;background:#b4b4b4"></div>
<div class="a" style="left:205px;top:22px;width:1px;height:41px;background:#7c7c7c"></div>
<!-- working orders header -->
<div class="a" style="left:206px;top:63px;width:1066px;height:18px;background:linear-gradient(#fff,#f4f4f4 60%,#e6e6e6)"></div>
<div class="a hdr" style="left:206px;top:81px;width:1066px;height:29px"></div>
<div class="a" style="left:206px;top:110px;width:1066px;height:1px;background:#d0d0d0"></div>
<div class="a" style="left:206px;top:111px;width:17px;height:190px;background:#f0f0f0"></div>
<div class="a" style="left:223px;top:111px;width:1049px;height:190px;background:#fff"></div>

<div class="a" style="left:210px;top:64px;width:16px;height:16px;border:1px solid #a2a2a2;background:#fdfdfd"></div>
<div class="a" style="left:212px;top:66px;width:12px;height:12px;border:1px solid #5c5ca4;background:#fff"></div>
<svg class="a" style="left:213px;top:67px" width="10" height="10"><defs><linearGradient id="fg1" x1="0" y1="0" x2="0" y2="1"><stop offset="0" stop-color="#2a7cff"/><stop offset="0.4" stop-color="#1010f0"/><stop offset="1" stop-color="#0000d0"/></linearGradient></defs><path d="M0.8 1.8H9.2L5.9 5V8H4.1V5Z" fill="url(#fg1)"/></svg>
<div class="t" style="left:230px;top:66px;letter-spacing:0.154px;">Working Orders</div>
<div class="t" style="left:334px;top:66px;letter-spacing:0.925px;">(0/0)</div>
<div class="a" style="left:876px;top:81px;width:100px;height:29px;background:linear-gradient(#e4e4e4,#d6d6d6 60%,#c6c6c6)"></div>
<svg class="a" style="left:963px;top:94px" width="11" height="9"><path d="M1 1H10L5.5 8Z" fill="#fff" stroke="#b4b4b4" stroke-width="1"/></svg>
<div class="t" style="left:245.2px;top:98px;letter-spacing:0.3px;">Account</div>
<div class="t" style="left:361px;top:98px;letter-spacing:0.04px;">Status</div>
<div class="t" style="left:451.4px;top:83px;letter-spacing:0.867px;">Buy/</div>
<div class="t" style="left:454px;top:96px;letter-spacing:0.333px;">Sell</div>
<div class="t" style="left:487.4px;top:83px;letter-spacing:-0.08px;">Qty To</div>
<div class="t" style="left:495px;top:96px;letter-spacing:1.0px;">Fill</div>
<div class="t" style="left:542px;top:83px;letter-spacing:0.35px;">Max</div>
<div class="t" style="left:529px;top:96px;letter-spacing:-0.114px;">Show Qty</div>
<div class="t" style="left:616px;top:98px;letter-spacing:0.0px;">Symbol</div>
<div class="t" style="left:694.3px;top:83px;letter-spacing:-0.275px;">Price</div>
<div class="t" style="left:695.5px;top:96px;letter-spacing:-0.1px;">Type</div>
<div class="t" style="left:739px;top:83px;letter-spacing:0.65px;">Limit</div>
<div class="t" style="left:739.6px;top:96px;letter-spacing:-0.05px;">Price</div>
<div class="t" style="left:795px;top:83px;letter-spacing:0.0px;">Qty</div>
<div class="t" style="left:789px;top:96px;letter-spacing:0.74px;">Filled</div>
<div class="t" style="left:842px;top:83px;letter-spacing:0.0px;">Qty</div>
<div class="t" style="left:831px;top:96px;letter-spacing:0.083px;">Working</div>
<div class="t" style="left:882.3px;top:98px;letter-spacing:0.264px;">Order Number</div>
<div class="t" style="left:985.5px;top:83px;letter-spacing:0.357px;">Original</div>
<div class="t" style="left:979px;top:96px;letter-spacing:0.0px;">Sequenc...</div>
<div class="t" style="left:1037.5px;top:83px;letter-spacing:0.393px;">Current Sequence</div>
<div class="t" style="left:1065px;top:96px;letter-spacing:0.48px;">Number</div>
<div class="t" style="left:1167px;top:98px;letter-spacing:0.217px;">User Id</div>
<div class="t" style="left:1239.6px;top:98px;letter-spacing:0.2px">Exchange</div>

<div class="a" style="left:206px;top:301px;width:1066px;height:17px;background:#f8f8f8"></div>
<div class="a" style="left:206px;top:301px;width:401px;height:17px;background:#f0f0f0;box-shadow:inset -1px -1px 0 #646464,inset -2px -2px 0 #a2a2a2,inset 0 1px 0 #f6f6f6,inset 0 2px 0 #fff"></div><div class="a" style="left:607px;top:301px;width:1px;height:17px;background:#fff"></div>
<div class="a" style="left:221px;top:301px;width:1px;height:16px;background:#a8a8a8"></div><div class="a" style="left:222px;top:301px;width:1px;height:16px;background:#686868"></div><div class="a" style="left:223px;top:302px;width:1px;height:14px;background:#fff"></div>
<svg class="a" style="left:210px;top:303px" width="6" height="10"><path d="M5 0.5V9.5L0.5 5Z" fill="#000"/></svg>
<div class="a" style="left:1262px;top:301px;width:10px;height:17px;background:#f0f0f0;border-bottom:1px solid #909090"></div>
<svg class="a" style="left:1267px;top:304px" width="6" height="10"><path d="M0.5 0.5V9.5L5 5Z" fill="#000"/></svg>
<!-- completed header -->
<div class="a" style="left:206px;top:318px;width:1066px;height:19px;background:linear-gradient(#fff,#f4f4f4 60%,#e4e4e4)"></div>
<div class="a" style="left:1259px;top:322px;width:14px;height:14px;background:#e8e8e8;border:1px solid #a8a8a8"></div>
<svg class="a" style="left:1264px;top:325px" width="8" height="9"><path d="M4 1V9M1 4L4 1L7 4" fill="none" stroke="#205090" stroke-width="1"/></svg>
<div class="a" style="left:206px;top:337px;width:1066px;height:326px;background:#fff"></div>
<div class="a hdr" style="left:206px;top:337px;width:1030px;height:29px"></div>
<div class="a" style="left:206px;top:366px;width:1030px;height:1px;background:#d4d4d4"></div>
<div class="a" style="left:206px;top:367px;width:17px;height:296px;background:#f0f0f0"></div>

<div class="a" style="left:210px;top:321px;width:16px;height:16px;border:1px solid #a2a2a2;background:#fdfdfd"></div>
<div class="a" style="left:212px;top:323px;width:12px;height:12px;border:1px solid #5c5ca4;background:#fff"></div>
<svg class="a" style="left:213px;top:324px" width="10" height="10"><defs><linearGradient id="fg2" x1="0" y1="0" x2="0" y2="1"><stop offset="0" stop-color="#2a7cff"/><stop offset="0.4" stop-color="#1010f0"/><stop offset="1" stop-color="#0000d0"/></linearGradient></defs><path d="M0.8 1.8H9.2L5.9 5V8H4.1V5Z" fill="url(#fg2)"/></svg>
<div class="t" style="left:229.4px;top:322px;letter-spacing:0.32px;">Completed Orders</div>
<div class="t" style="left:333.8px;top:322px;letter-spacing:0.617px;">(18/18)</div>
<div class="t" style="left:240.5px;top:354px;letter-spacing:0.267px;">Account</div>
<div class="t" style="left:341px;top:354px;letter-spacing:0.04px;">Status</div>
<div class="t" style="left:431.3px;top:354px;letter-spacing:-0.183px;">Remarks</div>
<div class="t" style="left:490.1px;top:339px;letter-spacing:0.967px;">Buy/</div>
<div class="t" style="left:493px;top:352px;letter-spacing:0.333px;">Sell</div>
<div class="t" style="left:526.7px;top:339px;letter-spacing:-0.14px;">Qty To</div>
<div class="t" style="left:534.5px;top:352px;letter-spacing:0.9px;">Fill</div>
<div class="t" style="left:601.3px;top:354px;letter-spacing:-0.12px;">Symbol</div>
<div class="t" style="left:686px;top:339px;letter-spacing:0.043px;">Avg Fill</div>
<div class="t" style="left:691.2px;top:352px;letter-spacing:-0.325px;">Price</div>
<div class="t" style="left:748.4px;top:339px;letter-spacing:0.575px;">Limit</div>
<div class="t" style="left:749.2px;top:352px;letter-spacing:-0.2px;">Price</div>
<div class="t" style="left:797.3px;top:354px;letter-spacing:0.245px;">Order Number</div>
<div class="t" style="left:898.4px;top:354px;letter-spacing:0.013px;">Update Time (EST)</div>
<div class="t" style="left:1014px;top:339px;letter-spacing:0.0px;">Qty</div>
<div class="t" style="left:1008px;top:352px;letter-spacing:0.72px;">Filled</div>
<div class="t" style="left:1055.6px;top:354px;letter-spacing:-0.012px;">Create Time (EST)</div>
<div class="t" style="left:1165.6px;top:354px;letter-spacing:0.222px;">Commission</div>
<svg class="a" style="left:878px;top:350px" width="11" height="9"><path d="M1 1H10L5.5 8Z" fill="#fff" stroke="#b4b4b4" stroke-width="1"/></svg>
<div class="row" style="top:367px;background:#ffb6c1"><span class="t" style="left:3.00px;top:1px;letter-spacing:-0.586px">APEX-...</span><span class="t" style="left:76.40px;top:2px;letter-spacing:0.64px">Filled</span><span class="t" style="left:266.20px;top:2px;letter-spacing:0px">S</span><span class="t" style="left:331.60px;top:2px;letter-spacing:0px">1</span><span class="t" style="left:343.90px;top:2px;letter-spacing:-0.925px">MNQH6</span><span class="t" style="left:457.30px;top:1px;letter-spacing:0.122px">25910.7...</span><span class="t" style="left:569.90px;top:2px;letter-spacing:-0.033px">2557620154</span><span class="t" style="left:670.10px;top:2px;letter-spacing:0.067px">2026-01-12 09:52:00</span><span class="t" style="left:812.80px;top:2px;letter-spacing:0px">1</span><span class="t" style="left:825.30px;top:2px;letter-spacing:0.056px">2026-01-12 09:52:00</span></div>
<div class="row" style="top:383px;background:#ffb6c1"><span class="t" style="left:3.00px;top:1px;letter-spacing:-0.586px">APEX-...</span><span class="t" style="left:76.40px;top:2px;letter-spacing:0.64px">Filled</span><span class="t" style="left:266.20px;top:2px;letter-spacing:0px">S</span><span class="t" style="left:331.60px;top:2px;letter-spacing:0px">1</span><span class="t" style="left:343.90px;top:2px;letter-spacing:-0.925px">MNQH6</span><span class="t" style="left:457.30px;top:1px;letter-spacing:0.122px">25911.5...</span><span class="t" style="left:569.90px;top:2px;letter-spacing:-0.033px">2557618107</span><span class="t" style="left:670.10px;top:2px;letter-spacing:0.067px">2026-01-12 09:51:50</span><span class="t" style="left:812.80px;top:2px;letter-spacing:0px">1</span><span class="t" style="left:825.30px;top:2px;letter-spacing:0.056px">2026-01-12 09:51:50</span></div>
<div class="rh" style="top:382px"></div>
<div class="row" style="top:399px;background:#ffb6c1"><span class="t" style="left:3.00px;top:1px;letter-spacing:-0.586px">APEX-...</span><span class="t" style="left:76.40px;top:2px;letter-spacing:0.64px">Filled</span><span class="t" style="left:266.20px;top:2px;letter-spacing:0px">S</span><span class="t" style="left:331.60px;top:2px;letter-spacing:0px">1</span><span class="t" style="left:343.90px;top:2px;letter-spacing:-0.925px">MNQH6</span><span class="t" style="left:457.30px;top:1px;letter-spacing:0.122px">25900.2...</span><span class="t" style="left:569.90px;top:2px;letter-spacing:-0.033px">2557616936</span><span class="t" style="left:670.10px;top:2px;letter-spacing:0.067px">2026-01-12 09:51:46</span><span class="t" style="left:812.80px;top:2px;letter-spacing:0px">1</span><span class="t" style="left:825.30px;top:2px;letter-spacing:0.056px">2026-01-12 09:51:46</span></div>
<div class="rh" style="top:398px"></div>
<div class="row" style="top:415px;background:#b0c4de"><span class="t" style="left:3.00px;top:1px;letter-spacing:-0.586px">APEX-...</span><span class="t" style="left:76.40px;top:2px;letter-spacing:0.64px">Filled</span><span class="t" style="left:266.20px;top:2px;letter-spacing:0px">B</span><span class="t" style="left:331.60px;top:2px;letter-spacing:0px">1</span><span class="t" style="left:343.90px;top:2px;letter-spacing:-0.925px">MNQH6</span><span class="t" style="left:457.30px;top:1px;letter-spacing:0.122px">25856.2...</span><span class="t" style="left:569.90px;top:2px;letter-spacing:-0.033px">2557386939</span><span class="t" style="left:670.10px;top:2px;letter-spacing:0.067px">2026-01-12 09:34:59</span><span class="t" style="left:812.80px;top:2px;letter-spacing:0px">1</span><span class="t" style="left:825.30px;top:2px;letter-spacing:0.056px">2026-01-12 09:34:59</span></div>
<div class="rh" style="top:414px"></div>
<div class="row" style="top:431px;background:#b0c4de"><span class="t" style="left:3.00px;top:1px;letter-spacing:-0.586px">APEX-...</span><span class="t" style="left:76.40px;top:2px;letter-spacing:0.64px">Filled</span><span class="t" style="left:266.20px;top:2px;letter-spacing:0px">B</span><span class="t" style="left:331.60px;top:2px;letter-spacing:0px">1</span><span class="t" style="left:343.90px;top:2px;letter-spacing:-0.925px">MNQH6</span><span class="t" style="left:457.30px;top:1px;letter-spacing:0.122px">25858.0...</span><span class="t" style="left:569.90px;top:2px;letter-spacing:-0.033px">2557386049</span><span class="t" style="left:670.10px;top:2px;letter-spacing:0.067px">2026-01-12 09:34:56</span><span class="t" style="left:812.80px;top:2px;letter-spacing:0px">1</span><span class="t" style="left:825.30px;top:2px;letter-spacing:0.056px">2026-01-12 09:34:56</span></div>
<div class="rh" style="top:430px"></div>
<div class="row" style="top:447px;background:#b0c4de"><span class="t" style="left:3.00px;top:1px;letter-spacing:-0.586px">APEX-...</span><span class="t" style="left:76.40px;top:2px;letter-spacing:0.64px">Filled</span><span class="t" style="left:266.20px;top:2px;letter-spacing:0px">B</span><span class="t" style="left:331.60px;top:2px;letter-spacing:0px">1</span><span class="t" style="left:343.90px;top:2px;letter-spacing:-0.925px">MNQH6</span><span class="t" style="left:457.30px;top:1px;letter-spacing:0.122px">25855.5...</span><span class="t" style="left:569.90px;top:2px;letter-spacing:-0.033px">2557383553</span><span class="t" style="left:670.10px;top:2px;letter-spacing:0.067px">2026-01-12 09:34:42</span><span class="t" style="left:812.80px;top:2px;letter-spacing:0px">1</span><span class="t" style="left:825.30px;top:2px;letter-spacing:0.056px">2026-01-12 09:34:42</span></div>
<div class="rh" style="top:446px"></div>
<div class="row" style="top:463px;background:#ffb6c1"><span class="t" style="left:3.00px;top:1px;letter-spacing:-0.586px">APEX-...</span><span class="t" style="left:76.40px;top:2px;letter-spacing:0.64px">Filled</span><span class="t" style="left:266.20px;top:2px;letter-spacing:0px">S</span><span class="t" style="left:331.60px;top:2px;letter-spacing:0px">1</span><span class="t" style="left:343.90px;top:2px;letter-spacing:-0.925px">MNQH6</span><span class="t" style="left:457.30px;top:1px;letter-spacing:0.122px">25831.2...</span><span class="t" style="left:569.90px;top:2px;letter-spacing:-0.033px">2557362182</span><span class="t" style="left:670.10px;top:2px;letter-spacing:0.067px">2026-01-12 09:32:52</span><span class="t" style="left:812.80px;top:2px;letter-spacing:0px">1</span><span class="t" style="left:825.30px;top:2px;letter-spacing:0.056px">2026-01-12 09:32:52</span></div>
<div class="rh" style="top:462px"></div>
<div class="row" style="top:479px;background:#ffb6c1"><span class="t" style="left:3.00px;top:1px;letter-spacing:-0.586px">APEX-...</span><span class="t" style="left:76.40px;top:2px;letter-spacing:0.64px">Filled</span><span class="t" style="left:266.20px;top:2px;letter-spacing:0px">S</span><span class="t" style="left:331.60px;top:2px;letter-spacing:0px">1</span><span class="t" style="left:343.90px;top:2px;letter-spacing:-0.925px">MNQH6</span><span class="t" style="left:457.30px;top:1px;letter-spacing:0.122px">25839.5...</span><span class="t" style="left:569.90px;top:2px;letter-spacing:-0.033px">2557361419</span><span class="t" style="left:670.10px;top:2px;letter-spacing:0.067px">2026-01-12 09:32:48</span><span class="t" style="left:812.80px;top:2px;letter-spacing:0px">1</span><span class="t" style="left:825.30px;top:2px;letter-spacing:0.056px">2026-01-12 09:32:48</span></div>
<div class="rh" style="top:478px"></div>
<div class="row" style="top:495px;background:#ffb6c1"><span class="t" style="left:3.00px;top:1px;letter-spacing:-0.586px">APEX-...</span><span class="t" style="left:76.40px;top:2px;letter-spacing:0.64px">Filled</span><span class="t" style="left:266.20px;top:2px;letter-spacing:0px">S</span><span class="t" style="left:331.60px;top:2px;letter-spacing:0px">1</span><span class="t" style="left:343.90px;top:2px;letter-spacing:-0.925px">MNQH6</span><span class="t" style="left:457.30px;top:1px;letter-spacing:0.122px">25838.2...</span><span class="t" style="left:569.90px;top:2px;letter-spacing:-0.033px">2557361244</span><span class="t" style="left:670.10px;top:2px;letter-spacing:0.067px">2026-01-12 09:32:47</span><span class="t" style="left:812.80px;top:2px;letter-spacing:0px">1</span><span class="t" style="left:825.30px;top:2px;letter-spacing:0.056px">2026-01-12 09:32:47</span></div>
<div class="rh" style="top:494px"></div>
<div class="row" style="top:511px;background:#ffb6c1"><span class="t" style="left:3.00px;top:1px;letter-spacing:-0.586px">APEX-...</span><span class="t" style="left:76.40px;top:2px;letter-spacing:0.64px">Filled</span><span class="t" style="left:266.20px;top:2px;letter-spacing:0px">S</span><span class="t" style="left:331.60px;top:2px;letter-spacing:0px">1</span><span class="t" style="left:343.90px;top:2px;letter-spacing:-0.925px">MNQH6</span><span class="t" style="left:457.30px;top:1px;letter-spacing:0.122px">25843.5...</span><span class="t" style="left:569.90px;top:2px;letter-spacing:-0.033px">2557360936</span><span class="t" style="left:670.10px;top:2px;letter-spacing:0.067px">2026-01-12 09:32:45</span><span class="t" style="left:812.80px;top:2px;letter-spacing:0px">1</span><span class="t" style="left:825.30px;top:2px;letter-spacing:0.056px">2026-01-12 09:32:45</span></div>
<div class="rh" style="top:510px"></div>
<div class="row" style="top:527px;background:#ffb6c1"><span class="t" style="left:3.00px;top:1px;letter-spacing:-0.586px">APEX-...</span><span class="t" style="left:76.40px;top:2px;letter-spacing:0.64px">Filled</span><span class="t" style="left:266.20px;top:2px;letter-spacing:0px">S</span><span class="t" style="left:331.60px;top:2px;letter-spacing:0px">1</span><span class="t" style="left:343.90px;top:2px;letter-spacing:-0.925px">MNQH6</span><span class="t" style="left:457.30px;top:1px;letter-spacing:0.122px">25892.7...</span><span class="t" style="left:569.90px;top:2px;letter-spacing:-0.033px">2557315948</span><span class="t" style="left:670.10px;top:2px;letter-spacing:0.067px">2026-01-12 10:32:50</span><span class="t" style="left:812.80px;top:2px;letter-spacing:0px">1</span><span class="t" style="left:825.30px;top:2px;letter-spacing:0.056px">2026-01-12 09:30:14</span></div>
<div class="rh" style="top:526px"></div>
<div class="row" style="top:543px;background:#ffb6c1"><span class="t" style="left:3.00px;top:1px;letter-spacing:-0.586px">APEX-...</span><span class="t" style="left:76.40px;top:2px;letter-spacing:0.64px">Filled</span><span class="t" style="left:266.20px;top:2px;letter-spacing:0px">S</span><span class="t" style="left:331.60px;top:2px;letter-spacing:0px">1</span><span class="t" style="left:343.90px;top:2px;letter-spacing:-0.925px">MNQH6</span><span class="t" style="left:457.30px;top:1px;letter-spacing:0.122px">25892.7...</span><span class="t" style="left:569.90px;top:2px;letter-spacing:-0.033px">2557314161</span><span class="t" style="left:670.10px;top:2px;letter-spacing:0.067px">2026-01-12 10:32:50</span><span class="t" style="left:812.80px;top:2px;letter-spacing:0px">1</span><span class="t" style="left:825.30px;top:2px;letter-spacing:0.056px">2026-01-12 09:30:09</span></div>
<div class="rh" style="top:542px"></div>
<div class="row" style="top:559px;background:#b0c4de"><span class="t" style="left:3.00px;top:1px;letter-spacing:-0.586px">APEX-...</span><span class="t" style="left:76.40px;top:2px;letter-spacing:0.64px">Filled</span><span class="t" style="left:266.20px;top:2px;letter-spacing:0px">B</span><span class="t" style="left:331.60px;top:2px;letter-spacing:0px">1</span><span class="t" style="left:343.90px;top:2px;letter-spacing:-0.925px">MNQH6</span><span class="t" style="left:457.30px;top:1px;letter-spacing:0.122px">25737.0...</span><span class="t" style="left:569.90px;top:2px;letter-spacing:-0.033px">2557302681</span><span class="t" style="left:670.10px;top:2px;letter-spacing:0.067px">2026-01-12 09:29:00</span><span class="t" style="left:812.80px;top:2px;letter-spacing:0px">1</span><span class="t" style="left:825.30px;top:2px;letter-spacing:0.056px">2026-01-12 09:29:00</span></div>
<div class="rh" style="top:558px"></div>
<div class="row" style="top:575px;background:#b0c4de"><span class="t" style="left:3.00px;top:1px;letter-spacing:-0.586px">APEX-...</span><span class="t" style="left:76.40px;top:2px;letter-spacing:0.64px">Filled</span><span class="t" style="left:266.20px;top:2px;letter-spacing:0px">B</span><span class="t" style="left:331.60px;top:2px;letter-spacing:0px">1</span><span class="t" style="left:343.90px;top:2px;letter-spacing:-0.925px">MNQH6</span><span class="t" style="left:457.30px;top:1px;letter-spacing:0.122px">25734.2...</span><span class="t" style="left:569.90px;top:2px;letter-spacing:-0.033px">2557301108</span><span class="t" style="left:670.10px;top:2px;letter-spacing:0.067px">2026-01-12 09:28:24</span><span class="t" style="left:812.80px;top:2px;letter-spacing:0px">1</span><span class="t" style="left:825.30px;top:2px;letter-spacing:0.056px">2026-01-12 09:28:24</span></div>
<div class="rh" style="top:574px"></div>
<div class="row" style="top:591px;background:#b0c4de"><span class="t" style="left:3.00px;top:1px;letter-spacing:-0.586px">APEX-...</span><span class="t" style="left:76.40px;top:2px;letter-spacing:0.64px">Filled</span><span class="t" style="left:266.20px;top:2px;letter-spacing:0px">B</span><span class="t" style="left:331.60px;top:2px;letter-spacing:0px">1</span><span class="t" style="left:343.90px;top:2px;letter-spacing:-0.925px">MNQH6</span><span class="t" style="left:457.30px;top:1px;letter-spacing:0.122px">25735.7...</span><span class="t" style="left:569.90px;top:2px;letter-spacing:-0.033px">2557301057</span><span class="t" style="left:670.10px;top:2px;letter-spacing:0.067px">2026-01-12 09:28:23</span><span class="t" style="left:812.80px;top:2px;letter-spacing:0px">1</span><span class="t" style="left:825.30px;top:2px;letter-spacing:0.056px">2026-01-12 09:28:23</span></div>
<div class="rh" style="top:590px"></div>
<div class="row" style="top:607px;background:#b0c4de"><span class="t" style="left:3.00px;top:1px;letter-spacing:-0.586px">APEX-...</span><span class="t" style="left:76.40px;top:2px;letter-spacing:0.64px">Filled</span><span class="t" style="left:266.20px;top:2px;letter-spacing:0px">B</span><span class="t" style="left:331.60px;top:2px;letter-spacing:0px">1</span><span class="t" style="left:343.90px;top:2px;letter-spacing:-0.925px">MNQH6</span><span class="t" style="left:457.30px;top:1px;letter-spacing:0.122px">25736.0...</span><span class="t" style="left:569.90px;top:2px;letter-spacing:-0.033px">2557300995</span><span class="t" style="left:670.10px;top:2px;letter-spacing:0.067px">2026-01-12 09:28:22</span><span class="t" style="left:812.80px;top:2px;letter-spacing:0px">1</span><span class="t" style="left:825.30px;top:2px;letter-spacing:0.056px">2026-01-12 09:28:22</span></div>
<div class="rh" style="top:606px"></div>
<div class="row" style="top:623px;background:#b0c4de"><span class="t" style="left:3.00px;top:1px;letter-spacing:-0.586px">APEX-...</span><span class="t" style="left:76.40px;top:2px;letter-spacing:0.64px">Filled</span><span class="t" style="left:266.20px;top:2px;letter-spacing:0px">B</span><span class="t" style="left:331.60px;top:2px;letter-spacing:0px">1</span><span class="t" style="left:343.90px;top:2px;letter-spacing:-0.925px">MNQH6</span><span class="t" style="left:457.30px;top:1px;letter-spacing:0.122px">25735.2...</span><span class="t" style="left:569.90px;top:2px;letter-spacing:-0.033px">2557300898</span><span class="t" style="left:670.10px;top:2px;letter-spacing:0.067px">2026-01-12 09:28:20</span><span class="t" style="left:812.80px;top:2px;letter-spacing:0px">1</span><span class="t" style="left:825.30px;top:2px;letter-spacing:0.056px">2026-01-12 09:28:20</span></div>
<div class="rh" style="top:622px"></div>
<div class="row" style="top:639px;background:#b0c4de"><span class="t" style="left:3.00px;top:1px;letter-spacing:-0.586px">APEX-...</span><span class="t" style="left:76.40px;top:2px;letter-spacing:0.64px">Filled</span><span class="t" style="left:266.20px;top:2px;letter-spacing:0px">B</span><span class="t" style="left:331.60px;top:2px;letter-spacing:0px">1</span><span class="t" style="left:343.90px;top:2px;letter-spacing:-0.925px">MNQH6</span><span class="t" style="left:457.30px;top:1px;letter-spacing:0.122px">25735.0...</span><span class="t" style="left:569.90px;top:2px;letter-spacing:-0.033px">2557300851</span><span class="t" style="left:670.10px;top:2px;letter-spacing:0.067px">2026-01-12 09:28:19</span><span class="t" style="left:812.80px;top:2px;letter-spacing:0px">1</span><span class="t" style="left:825.30px;top:2px;letter-spacing:0.056px">2026-01-12 09:28:19</span></div>
<div class="rh" style="top:638px"></div>
<div class="rh" style="top:654px"></div>
<div class="a" style="left:223px;top:367px;width:73px;height:15px;border:1px dotted #000"></div>
<svg class="a" style="left:213px;top:371px" width="5" height="8"><path d="M0 0V8L4.5 4Z" fill="#000"/></svg>
<div class="a" style="left:1022px;top:662px;width:2px;height:1px;background:#9a9a9a"></div><div class="a" style="left:1088px;top:662px;width:1px;height:1px;background:#9a9a9a"></div><div class="a" style="left:1111px;top:662px;width:1px;height:1px;background:#9a9a9a"></div>

<!-- toolbar title -->
<svg class="a" style="left:206px;top:23px" width="200" height="40" viewBox="206 23 200 40">
 <defs>
  <linearGradient id="cabF" x1="0" y1="0" x2="1" y2="0"><stop offset="0" stop-color="#c4c4c4"/><stop offset="1" stop-color="#8e8e8e"/></linearGradient>
  <linearGradient id="cabS" x1="0" y1="0" x2="1" y2="0"><stop offset="0" stop-color="#8a8a8a"/><stop offset="1" stop-color="#6a6a6a"/></linearGradient>
  <linearGradient id="refl" x1="0" y1="0" x2="0" y2="1"><stop offset="0" stop-color="#fff" stop-opacity="0.55"/><stop offset="1" stop-color="#fff" stop-opacity="0"/></linearGradient>
  <linearGradient id="refm" x1="0" y1="0" x2="0" y2="1"><stop offset="0" stop-color="#fff" stop-opacity="0"/><stop offset="0.35" stop-color="#fff" stop-opacity="0.05"/><stop offset="1" stop-color="#fff" stop-opacity="0.5"/></linearGradient>
  <mask id="rm"><rect x="250" y="34" width="150" height="13.5" fill="url(#refm)"/></mask>
 </defs>
 <!-- cabinet shadow -->
 <polygon points="237.7,59.7 244.3,56.2 250,50 244.3,49" fill="#333" opacity="0.45"/>
 <!-- cabinet body -->
 <polygon points="220,29.3 227.5,27 244.3,28.3 237.7,30.9" fill="#d2d2d2"/>
 <polygon points="237.7,30.9 244.3,28.3 244.3,56.2 237.7,59.7" fill="url(#cabS)"/>
 <polygon points="220,29.3 237.7,30.9 237.7,59.7 220.5,55.6" fill="url(#cabF)"/>
 <polygon points="220,29.3 237.7,30.9 237.7,31.9 220,30.3" fill="#e4e4e4"/>
 <!-- top drawer -->
 <polygon points="221.2,31.5 235.8,32.9 235.8,39.6 221.2,38.2" fill="#c6c6c6" stroke="#e0e0e0" stroke-width="0.7"/>
 <polygon points="222.4,33 234.6,34.2 234.6,38.3 222.4,37.1" fill="#9c9c9c"/>
 <polygon points="226,34.6 231,35.1 231,36.6 226,36.1" fill="#c8c8c8"/>
 <!-- bottom drawer -->
 <polygon points="221.2,49 235.5,50.6 235.5,58 221.2,54.6" fill="#b4b4b4" stroke="#d0d0d0" stroke-width="0.7"/>
 <polygon points="222.4,50.5 234.3,51.8 234.3,56.3 222.4,53.6" fill="#909090"/>
 <polygon points="226,52 231,52.6 231,54.2 226,53.4" fill="#bcbcbc"/>
 <!-- middle drawer open -->
 <polygon points="221.2,40 235.8,41.4 235.8,48 221.2,46.6" fill="#707070"/>
 <polygon points="219,40.7 234.8,42.3 233.9,44.5 230.7,44.9 217.5,42.2" fill="#e8a82e"/>
 <polygon points="220,40.9 234,42.3 233.5,43.2 219.2,41.8" fill="#f6c45a"/>
 <polygon points="217,41.6 230.4,43.4 230.4,48.3 217,45.8" fill="#bebebe" stroke="#d8d8d8" stroke-width="0.6"/>
 <polygon points="218,43 229.4,44.5 229.4,47.2 218,45.1" fill="#a2a2a2"/>
 <polygon points="221.5,44.2 226,44.8 226,46 221.5,45.3" fill="#d0d0d0"/>
 <polygon points="230.4,43.4 233.9,44.5 233.9,48.6 230.4,48.3" fill="#8a8a8a"/>
 <!-- title text -->
 <g font-family="Liberation Sans, sans-serif" font-size="17.5px">
  <text x="254" y="46.5" font-weight="bold" fill="#fff" textLength="60" lengthAdjust="spacingAndGlyphs" stroke="#fff" stroke-width="0.5" style="filter:drop-shadow(1px 1px 1px rgba(0,0,0,.6))">Order</text>
  <text x="319.5" y="46.5" fill="#e4e4e4" textLength="63" lengthAdjust="spacingAndGlyphs" stroke="#6a6a6a" stroke-width="0.45">History</text>
  <g mask="url(#rm)" transform="translate(0,94.5) scale(1,-1)">
   <text x="254" y="46.5" font-weight="bold" fill="#fff" textLength="60" lengthAdjust="spacingAndGlyphs">Order</text>
   <text x="319.5" y="46.5" fill="#ddd" textLength="63" lengthAdjust="spacingAndGlyphs" opacity="0.6">History</text>
  </g>
 </g>
</svg>
<!-- select accounts -->
<div class="a" style="left:422px;top:30px;width:115px;height:26px;background:#ee82ee;border:1px solid #6e1a6e"></div>
<div class="t" style="left:438.2px;top:37px;color:#fff;letter-spacing:0.321px">Select Accounts</div>
<!-- date box -->
<div class="a" style="left:551px;top:30px;width:143px;height:29px;border:5px solid #ed1c24"></div>
<div class="t" style="left:557px;top:38px;color:#87cefa;font-size:11px;text-decoration:underline;white-space:pre;letter-spacing:0.07px">2026-01-11  -  2026-01-14</div>


<svg class="a" style="left:700px;top:23px" width="420" height="40" viewBox="700 23 420 40">
 <defs>
  <radialGradient id="mg" cx="0.4" cy="0.3" r="0.85"><stop offset="0" stop-color="#c2c2c2"/><stop offset="0.55" stop-color="#b0b0b0"/><stop offset="0.85" stop-color="#9a9a9a"/><stop offset="1" stop-color="#808080"/></radialGradient><linearGradient id="lens" x1="0" y1="0" x2="0.3" y2="1"><stop offset="0" stop-color="#d0d0d0"/><stop offset="0.5" stop-color="#808080"/><stop offset="1" stop-color="#101010"/></linearGradient>
  <radialGradient id="gold" cx="0.35" cy="0.3" r="0.8"><stop offset="0" stop-color="#f6dc8a"/><stop offset="0.6" stop-color="#d8aa3c"/><stop offset="1" stop-color="#9a7420"/></radialGradient>
  <linearGradient id="gdoc" x1="0" y1="0" x2="1" y2="1"><stop offset="0" stop-color="#f8dc84"/><stop offset="0.5" stop-color="#ecc452"/><stop offset="1" stop-color="#d8a630"/></linearGradient>
  <linearGradient id="gear" x1="0" y1="0" x2="1" y2="1"><stop offset="0" stop-color="#fbe070"/><stop offset="0.5" stop-color="#f8d858"/><stop offset="1" stop-color="#f0b060"/></linearGradient>
  <linearGradient id="blu" x1="0" y1="0" x2="1" y2="1"><stop offset="0" stop-color="#f2fafc"/><stop offset="1" stop-color="#a8d4de"/></linearGradient>
  <radialGradient id="grn" cx="0.55" cy="0.55" r="0.6"><stop offset="0" stop-color="#98dc94"/><stop offset="0.6" stop-color="#58b45c"/><stop offset="1" stop-color="#2a8a36"/></radialGradient>
 </defs>
 <!-- magnifier -->
 <circle cx="720.6" cy="43.8" r="12.3" fill="#3c3c3c" opacity="0.45"/>
 <circle cx="720.5" cy="43.2" r="12" fill="url(#mg)"/>
 <circle cx="718.1" cy="40.6" r="4" fill="#c4c4c4" fill-opacity="0.55" stroke="url(#lens)" stroke-width="1.1"/>
 <path d="M721.2 43.5L726.9 48.8" stroke="#0a0a0a" stroke-width="2.5" stroke-linecap="round"/>
 <!-- paperclip -->
 <path d="M804.2 36.5V52.4 a5.6 5.4 0 0 1 -11.2 0 V34 a4.3 4.3 0 0 1 8.6 0 V47.6 a2.6 2.6 0 0 1 -5.2 0 V37.2" fill="none" stroke="#a87c20" stroke-width="2.9"/>
 <path d="M804.2 36.5V52.4 a5.6 5.4 0 0 1 -11.2 0 V34 a4.3 4.3 0 0 1 8.6 0 V47.6 a2.6 2.6 0 0 1 -5.2 0 V37.2" fill="none" stroke="#e8bc50" stroke-width="1.7"/>
 <path d="M804.2 36.5V52.4 a5.6 5.4 0 0 1 -11.2 0 V34 a4.3 4.3 0 0 1 8.6 0 V47.6 a2.6 2.6 0 0 1 -5.2 0 V37.2" fill="none" stroke="#f8dc88" stroke-width="0.6" transform="translate(-0.3,0)"/>
 <circle cx="811.3" cy="50.3" r="8.4" fill="#2a2a2a" opacity="0.45"/>
 <circle cx="810.8" cy="49.6" r="8" fill="url(#gold)"/>
 <path d="M807.8 45.3L814 53.6M814 45.3L807.8 53.6" stroke="#e81818" stroke-width="1.6"/>
 <!-- gears + floppy -->
 <path d="M845.20,37.40 L845.14,38.38 L843.69,39.00 L843.43,39.77 L844.20,41.15 L843.65,41.97 L842.08,41.78 L841.47,42.32 L841.45,43.90 L840.57,44.33 L839.30,43.39 L838.51,43.55 L837.70,44.90 L836.72,44.84 L836.10,43.39 L835.33,43.13 L833.95,43.90 L833.13,43.35 L833.32,41.78 L832.78,41.17 L831.20,41.15 L830.77,40.27 L831.71,39.00 L831.55,38.21 L830.20,37.40 L830.26,36.42 L831.71,35.80 L831.97,35.03 L831.20,33.65 L831.75,32.83 L833.32,33.02 L833.93,32.48 L833.95,30.90 L834.83,30.47 L836.10,31.41 L836.89,31.25 L837.70,29.90 L838.68,29.96 L839.30,31.41 L840.07,31.67 L841.45,30.90 L842.27,31.45 L842.08,33.02 L842.62,33.63 L844.20,33.65 L844.63,34.53 L843.69,35.80 L843.85,36.59Z M840.80,37.40 A3.1,3.1 0 1 0 834.60,37.40 A3.1,3.1 0 1 0 840.80,37.40Z" fill="url(#gear)" stroke="#f0a078" stroke-width="0.7" fill-rule="evenodd"/>
 <path d="M850.26,49.43 L850.01,50.34 L848.57,50.67 L848.18,51.35 L848.60,52.77 L847.93,53.43 L846.52,53.00 L845.83,53.39 L845.49,54.83 L844.58,55.07 L843.57,53.99 L842.79,53.99 L841.77,55.06 L840.86,54.81 L840.53,53.37 L839.85,52.98 L838.43,53.40 L837.77,52.73 L838.20,51.32 L837.81,50.63 L836.37,50.29 L836.13,49.38 L837.21,48.37 L837.21,47.59 L836.14,46.57 L836.39,45.66 L837.83,45.33 L838.22,44.65 L837.80,43.23 L838.47,42.57 L839.88,43.00 L840.57,42.61 L840.91,41.17 L841.82,40.93 L842.83,42.01 L843.61,42.01 L844.63,40.94 L845.54,41.19 L845.87,42.63 L846.55,43.02 L847.97,42.60 L848.63,43.27 L848.20,44.68 L848.59,45.37 L850.03,45.71 L850.27,46.62 L849.19,47.63 L849.19,48.41Z M846.20,48.00 A3.0,3.0 0 1 0 840.20,48.00 A3.0,3.0 0 1 0 846.20,48.00Z" fill="url(#gear)" stroke="#f0a078" stroke-width="0.7" fill-rule="evenodd"/>
 <polygon points="850.8,40.5 858.9,48.6 851.5,56.1 843.3,48.6" fill="#3c9c46" stroke="#2a7432" stroke-width="0.8"/>
 <polygon points="851,42 857,48 853,52 847,46" fill="#f2f4f2"/>
 <polygon points="846.6,49 849.4,51.8 847.8,53.4 845,50.6" fill="#d4dcd4"/>
 <path d="M868 42H875.2L871.6 45.8Z" fill="#1e1e1e"/>
 <!-- gears + arrow -->
 <path d="M903.50,38.00 L903.44,38.98 L901.99,39.60 L901.73,40.37 L902.50,41.75 L901.95,42.57 L900.38,42.38 L899.77,42.92 L899.75,44.50 L898.87,44.93 L897.60,43.99 L896.81,44.15 L896.00,45.50 L895.02,45.44 L894.40,43.99 L893.63,43.73 L892.25,44.50 L891.43,43.95 L891.62,42.38 L891.08,41.77 L889.50,41.75 L889.07,40.87 L890.01,39.60 L889.85,38.81 L888.50,38.00 L888.56,37.02 L890.01,36.40 L890.27,35.63 L889.50,34.25 L890.05,33.43 L891.62,33.62 L892.23,33.08 L892.25,31.50 L893.13,31.07 L894.40,32.01 L895.19,31.85 L896.00,30.50 L896.98,30.56 L897.60,32.01 L898.37,32.27 L899.75,31.50 L900.57,32.05 L900.38,33.62 L900.92,34.23 L902.50,34.25 L902.93,35.13 L901.99,36.40 L902.15,37.19Z M899.10,38.00 A3.1,3.1 0 1 0 892.90,38.00 A3.1,3.1 0 1 0 899.10,38.00Z" fill="url(#gear)" stroke="#f0a078" stroke-width="0.7" fill-rule="evenodd"/>
 <path d="M913.06,50.03 L912.81,50.94 L911.37,51.27 L910.98,51.95 L911.40,53.37 L910.73,54.03 L909.32,53.60 L908.63,53.99 L908.29,55.43 L907.38,55.67 L906.37,54.59 L905.59,54.59 L904.57,55.66 L903.66,55.41 L903.33,53.97 L902.65,53.58 L901.23,54.00 L900.57,53.33 L901.00,51.92 L900.61,51.23 L899.17,50.89 L898.93,49.98 L900.01,48.97 L900.01,48.19 L898.94,47.17 L899.19,46.26 L900.63,45.93 L901.02,45.25 L900.60,43.83 L901.27,43.17 L902.68,43.60 L903.37,43.21 L903.71,41.77 L904.62,41.53 L905.63,42.61 L906.41,42.61 L907.43,41.54 L908.34,41.79 L908.67,43.23 L909.35,43.62 L910.77,43.20 L911.43,43.87 L911.00,45.28 L911.39,45.97 L912.83,46.31 L913.07,47.22 L911.99,48.23 L911.99,49.01Z M909.00,48.60 A3.0,3.0 0 1 0 903.00,48.60 A3.0,3.0 0 1 0 909.00,48.60Z" fill="url(#gear)" stroke="#f0a078" stroke-width="0.7" fill-rule="evenodd"/>
 <path d="M884.4 45.6 C888 45.4 892 45 894.6 44 C894 46.5 894.8 48 895.9 48.6 C898.5 48.6 901 47.5 902.8 45.8 C903 49 902.5 51.5 901 53.6 C897.5 56 892 56.3 888.3 55.7 L885.8 57.8 C884.8 54 884.4 50 884.4 45.6Z" fill="url(#grn)" stroke="#2a8a36" stroke-width="0.8"/>
 <!-- folders -->
 <path d="M925 35L929 31.2H942.6V52.4H925Z" fill="url(#gdoc)" stroke="#c89a30" stroke-width="0.5"/>
 <path d="M930.2 38L934.2 34H948.3V56H930.2Z" fill="url(#gdoc)" stroke="#c89a30" stroke-width="0.5"/>
 <path d="M930.2 38L934.2 34V38Z" fill="#fbeab0"/>
 <!-- T doc -->
 <path d="M967 32.2H980.5L985.6 37.5V54.8H967Z" fill="url(#gdoc)" stroke="#c89a30" stroke-width="0.5"/>
 <path d="M980.5 32.2L985.6 37.5H980.5Z" fill="#fbeeb8"/>
 <text x="976" y="52.2" text-anchor="middle" font-family="Liberation Serif, serif" font-weight="bold" font-size="15.5px" fill="#4a2a0a">T</text>
 <path d="M999.8 42H1007L1003.4 45.8Z" fill="#1e1e1e"/>
 <!-- clipboard -->
 <rect x="1018" y="32" width="22" height="23.2" rx="1" fill="#dcb458" stroke="#a8802a" stroke-width="0.8"/>
 <rect x="1020.5" y="34.5" width="17" height="18" fill="#e8cc88"/>
 <path d="M1023.5 33.5 V31.5 H1027 C1027 29 1031.5 29 1031.5 31.5 H1035 V33.5Z" fill="#ecc868" stroke="#a8802a" stroke-width="0.6"/>
 <rect x="1025.7" y="34.7" width="18" height="21.5" fill="#2aa0bc"/>
 <rect x="1026.7" y="35.7" width="16" height="19.5" fill="#fff"/>
 <rect x="1027.5" y="36.5" width="14.4" height="17.9" fill="url(#blu)"/>
 <text x="1035.3" y="50" text-anchor="middle" font-family="Liberation Serif, serif" font-weight="bold" font-size="9.5px" fill="#3a2a1a">a,</text>
 <path d="M1054 42H1061.2L1057.6 45.8Z" fill="#1e1e1e"/>
 <!-- table icon -->
 <rect x="1072" y="32.2" width="23.7" height="22.3" fill="#2aa0bc"/>
 <rect x="1073" y="33.2" width="21.7" height="20.3" fill="#fff"/>
 <rect x="1074" y="34.2" width="19.7" height="18.3" fill="url(#blu)"/>
 <g stroke="#6a9aa4" stroke-width="0.9">
  <path d="M1075.3 38.4h6.6M1075.3 40.9h6.6M1075.3 43.4h6.6M1075.3 45.9h6.6M1075.3 48.4h6.6"/>
  <path d="M1085.2 38.4h6.8M1085.2 40.9h6.8M1085.2 43.4h6.8M1085.2 45.9h6.8M1085.2 48.4h6.8"/>
 </g>
</svg>

</body></html>
